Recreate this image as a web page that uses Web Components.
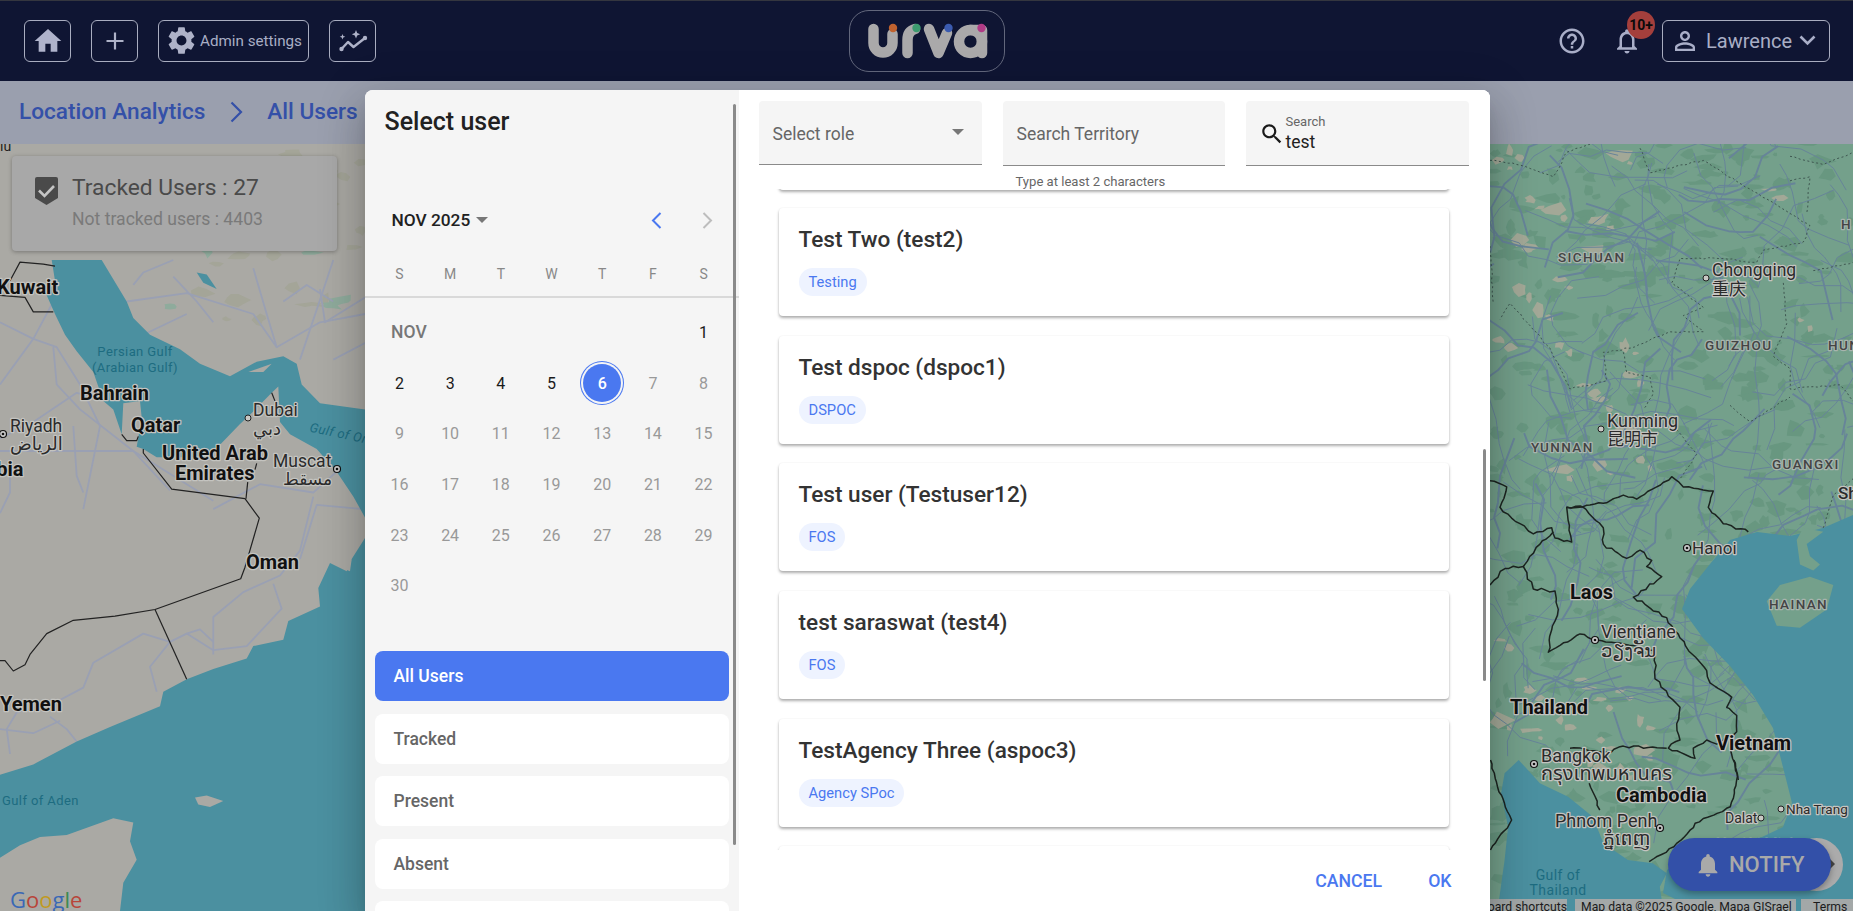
<!DOCTYPE html>
<html lang="en"><head><meta charset="utf-8"><title>Location Analytics</title>
<style>
html,body{margin:0;height:911px;overflow:hidden;background:#9a9fae;font-family:Roboto,"Liberation Sans",sans-serif}
app-shell{width:1853px;height:911px}
</style></head><body>
<app-shell></app-shell>
<script>
const ICON={
home:'M10 20v-6h4v6h5v-8h3L12 3 2 12h3v8z',
gear:'M19.14,12.94c0.04-0.3,0.06-0.61,0.06-0.94c0-0.32-0.02-0.64-0.07-0.94l2.03-1.58c0.18-0.14,0.23-0.41,0.12-0.61 l-1.92-3.32c-0.12-0.22-0.37-0.29-0.59-0.22l-2.39,0.96c-0.5-0.38-1.03-0.7-1.62-0.94L14.4,2.81c-0.04-0.24-0.24-0.41-0.48-0.41 h-3.84c-0.24,0-0.43,0.17-0.47,0.41L9.25,5.35C8.66,5.59,8.12,5.92,7.63,6.29L5.24,5.33c-0.22-0.08-0.47,0-0.59,0.22L2.74,8.87 C2.62,9.08,2.66,9.34,2.86,9.48l2.03,1.58C4.84,11.36,4.8,11.69,4.8,12s0.02,0.64,0.07,0.94l-2.03,1.58 c-0.18,0.14-0.23,0.41-0.12,0.61l1.92,3.32c0.12,0.22,0.37,0.29,0.59,0.22l2.39-0.96c0.5,0.38,1.03,0.7,1.62,0.94l0.36,2.54 c0.05,0.24,0.24,0.41,0.48,0.41h3.84c0.24,0,0.44-0.17,0.47-0.41l0.36-2.54c0.59-0.24,1.13-0.56,1.62-0.94l2.39,0.96 c0.22,0.08,0.47,0,0.59-0.22l1.92-3.32c0.12-0.22,0.07-0.47-0.12-0.61L19.14,12.94z M12,15.6c-1.98,0-3.6-1.62-3.6-3.6 s1.62-3.6,3.6-3.6s3.6,1.62,3.6,3.6S13.98,15.6,12,15.6z',
help:'M11 18h2v-2h-2v2zm1-16C6.48 2 2 6.48 2 12s4.48 10 10 10 10-4.48 10-10S17.52 2 12 2zm0 18c-4.41 0-8-3.59-8-8s3.59-8 8-8 8 3.59 8 8-3.59 8-8 8zm0-14c-2.21 0-4 1.79-4 4h2c0-1.1.9-2 2-2s2 .9 2 2c0 2-3 1.75-3 5h2c0-2.25 3-2.5 3-5 0-2.21-1.79-4-4-4z',
bellO:'M12 22c1.1 0 2-.9 2-2h-4c0 1.1.9 2 2 2zm6-6v-5c0-3.07-1.63-5.64-4.5-6.32V4c0-.83-.67-1.5-1.5-1.5s-1.5.67-1.5 1.5v.68C7.64 5.36 6 7.92 6 11v5l-2 2v1h16v-1l-2-2zm-2 1H8v-6c0-2.48 1.51-4.5 4-4.5s4 2.02 4 4.5v6z',
bell:'M12 22c1.1 0 2-.9 2-2h-4c0 1.1.89 2 2 2zm6-6v-5c0-3.07-1.64-5.64-4.5-6.32V4c0-.83-.67-1.5-1.5-1.5s-1.5.67-1.5 1.5v.68C7.63 5.36 6 7.92 6 11v5l-2 2v1h16v-1l-2-2z',
person:'M12 5.9c1.16 0 2.1.94 2.1 2.1s-.94 2.1-2.1 2.1S9.9 9.16 9.9 8s.94-2.1 2.1-2.1m0 9c2.97 0 6.1 1.46 6.1 2.1v1.1H5.9V17c0-.64 3.13-2.1 6.1-2.1M12 4C9.79 4 8 5.79 8 8s1.79 4 4 4 4-1.79 4-4-1.79-4-4-4zm0 9c-2.67 0-8 1.34-8 4v3h16v-3c0-2.66-5.33-4-8-4z',
search:'M15.5 14h-.79l-.28-.27C15.41 12.59 16 11.11 16 9.5 16 5.91 13.09 3 9.5 3S3 5.91 3 9.5 5.91 16 9.5 16c1.61 0 3.09-.59 4.23-1.57l.27.28v.79l5 4.99L20.49 19l-4.99-5zm-6 0C7.01 14 5 11.99 5 9.5S7.01 5 9.5 5 14 7.01 14 9.5 11.99 14 9.5 14z'
};
const svgI=(k,s,c)=>`<svg width="${s}" height="${s}" viewBox="0 0 24 24" fill="${c}" style="display:block;flex:none"><path d="${ICON[k]}"/></svg>`;
class Base extends HTMLElement{
  constructor(){super();this.attachShadow({mode:'open'});}
  render(css,html){this.shadowRoot.innerHTML=`<style>${css}</style>${html}`;}
}
const def=(n,c)=>customElements.define(n,c);

def('nav-button',class extends Base{connectedCallback(){
  this.render(`:host{display:inline-flex;align-items:center;justify-content:center;box-sizing:border-box;height:42px;min-width:47px;border:1px solid #a9adc0;border-radius:6px;color:#a9aec5;gap:6px;font-size:15px}`,`<slot></slot>`);
}});

def('urva-logo',class extends Base{connectedCallback(){
  this.render(`:host{display:block;box-sizing:border-box;width:156px;height:62px;border:1px solid #62677c;border-radius:20px}svg{display:block}`,
  `<svg width="154" height="60" viewBox="850 11 154 60" fill="none" stroke="#aaa9aa" stroke-width="10.5" stroke-linecap="round" stroke-linejoin="round" role="img" aria-label="urva">
   <path d="M873.5 29V43a9.5 9.5 0 0 0 19 0V34"/><path d="M907.5 53V40Q907.5 31 915 29"/><path d="M929 29L938.5 53L947 33"/>
   <circle cx="970.5" cy="41.5" r="11.5"/><path d="M970 30H982V53"/>
   <g stroke="none"><circle cx="893" cy="28" r="4.200" fill="#c0622f"/><circle cx="916.500" cy="28" r="4.200" fill="#3c9a6e"/><circle cx="948.500" cy="28" r="4.200" fill="#3b5bb0"/><circle cx="981.500" cy="28" r="4.200" fill="#b03b86"/></g></svg>`);
}});

def('app-header',class extends Base{connectedCallback(){
  this.render(`:host{display:grid;grid-template-columns:1fr auto 1fr;align-items:center;box-sizing:border-box;height:81px;background:#0f1533;border-top:1px solid #34363f;padding:0 23px 1px 24px}
  .l,.r{display:flex;align-items:center}.l{gap:20px}.r{justify-content:flex-end}
  .help{margin-right:25px}.bell{position:relative;margin-right:20px;height:30px}
  .badge{position:absolute;left:15px;top:-15px;width:28px;height:28px;border-radius:50%;background:#a43f3c;color:#0a0a0a;font:700 14px/28px Roboto,sans-serif;text-align:center}
  nav-button.user{width:168px;justify-content:flex-start;padding-left:7px;font-size:20px;gap:0}
  .name{margin:0 7px 0 6px}`,
  `<div class="l"><nav-button>${svgI('home',32,'#afb3cb')}</nav-button>
   <nav-button><svg width="24" height="24" viewBox="0 0 24 24" stroke="#aeb2c8" stroke-width="2.200"><path d="M12 3.500v17M3.500 12h17"/></svg></nav-button>
   <nav-button style="width:151px;justify-content:flex-start;padding-left:6px;gap:2px">${svgI('gear',33,'#aeb2c8')}<span style="font-size:15.200px">Admin settings</span></nav-button>
   <nav-button><svg width="30" height="26" viewBox="338 28 30 26" fill="none" stroke="#aeb2c8" stroke-width="2.400" stroke-linecap="round" stroke-linejoin="round"><path d="M341.500 49L348 42L353.500 47L365 38"/><g stroke="none" fill="#aeb2c8"><circle cx="341.500" cy="49" r="2.200"/><circle cx="365" cy="38" r="2.200"/><path d="M356 30l1.200 3 3 1.200-3 1.200-1.200 3-1.200-3-3-1.200 3-1.200zM342.500 34l.8 2 2 .8-2 .8-.8 2-.8-2-2-.8 2-.8z"/></g></svg></nav-button></div>
   <urva-logo></urva-logo>
   <div class="r"><span class="help">${svgI('help',30,'#a9aec8')}</span>
   <span class="bell">${svgI('bellO',30,'#a9aec8')}<span class="badge">10+</span></span>
   <nav-button class="user">${svgI('person',30,'#a9aec8')}<span class="name">Lawrence</span><svg width="17" height="11" viewBox="0 0 17 11" fill="none" stroke="#a9aec8" stroke-width="2.600"><path d="M1.500 1.500L8.500 8.500l7-7"/></svg></nav-button></div>`);
}});

def('bread-crumb',class extends Base{connectedCallback(){
  this.render(`:host{display:flex;align-items:center;box-sizing:border-box;height:63px;background:#9a9fae;padding:0 0 2px 19px;color:#3450a8;font-size:22.600px;font-weight:500;white-space:nowrap}
  svg{margin:0 24px 0 25px;display:block}`,
  `<span>Location Analytics</span><svg width="13" height="22" viewBox="0 0 13 22" fill="none" stroke="#3450a8" stroke-width="2.200"><path d="M1.500 1.500L11 11l-9.500 9.500"/></svg><span>All Users</span>`);
}});

def('tracked-card',class extends Base{connectedCallback(){
  this.render(`:host{position:absolute;left:12px;top:12px;box-sizing:border-box;width:325px;height:95px;background:#a8a8a8;border-radius:4px;box-shadow:0 1px 4px rgba(0,0,0,.3);display:flex;padding:21px 0 0 23px;gap:14px}
  .a{font-size:22.800px;line-height:24px;color:#4a4a4a;white-space:nowrap;margin-top:-1px}.b{font-size:17.600px;line-height:22px;color:#7a7a7a;margin-top:8px;white-space:nowrap}svg{display:block}`,
  `<svg width="23" height="28" viewBox="0 0 23 28"><path d="M2 0H21a2 2 0 0 1 2 2V21L11.500 28 0 21V2a2 2 0 0 1 2-2z" fill="#4a4a4a"/><path d="M4 13.500L9.500 19 19 9" fill="none" stroke="#c5c5c5" stroke-width="2.600"/></svg>
  <div><div class="a">Tracked Users : 27</div><div class="b">Not tracked users : 4403</div></div>`);
}});

def('notify-fab',class extends Base{connectedCallback(){
  this.render(`:host{position:absolute;left:1668px;top:694px;display:block;width:175px;height:53px}
  .c{position:absolute;right:0;top:0;width:53px;height:53px;border-radius:50%;background:#ababab}
  .c i{position:absolute;left:40px;top:21px;width:0;height:0;border-left:5px solid #444;border-top:5px solid transparent;border-bottom:5px solid transparent}
  .p{position:absolute;left:0;top:0;width:163px;height:53px;border-radius:27px;background:#3350a8;display:flex;align-items:center;box-shadow:0 3px 6px rgba(0,0,0,.3);color:#a9a9a9;font-size:22px;font-weight:500;box-sizing:border-box;padding-left:26px;gap:7px}`,
  `<div class="c"><i></i></div><div class="p">${svgI('bell',28,'#a9a9a9')}<span>NOTIFY</span></div>`);
}});

def('map-canvas',class extends Base{connectedCallback(){
  const L=(u,v)=>[u/3,260+v/2.409],R=(u,v)=>[1490+u/3,140+v/2.45],Z=(u,v)=>[1300+u/2.835,760+v/3];
  const pts=(a,f)=>{let s=[];for(let i=0;i<a.length;i+=2){const p=f(a[i],a[i+1]);s.push(p[0].toFixed(1)+','+p[1].toFixed(1));}return s.join(' ')};
  const pg=(a,f,c)=>`<polygon points="${pts(a,f)}" fill="${c}"/>`;
  const pl=(a,f,c,w,d)=>`<polyline points="${pts(a,f)}" fill="none" stroke="${c}" stroke-width="${w}" stroke-linejoin="round"${d?` stroke-dasharray="${d}"`:''}/>`;
  let seed=7;const rnd=()=>(seed=(seed*16807)%2147483647)/2147483647;
  const I=(u,v)=>[u,v];
  const jit=(a,amt)=>{const o=[];for(let i=0;i<a.length-2;i+=2){const x0=a[i],y0=a[i+1],x1=a[i+2],y1=a[i+3];const n=Math.max(1,Math.round(Math.hypot(x1-x0,y1-y0)/14));for(let k=0;k<n;k++){const t=k/n;o.push(x0+(x1-x0)*t+(k?(rnd()-.5)*amt:0),y0+(y1-y0)*t+(k?(rnd()-.5)*amt:0));}}o.push(a[a.length-2],a[a.length-1]);return o;};
  const blob=(x,y,rx,ry,c)=>{const n=6+Math.floor(rnd()*4);let p=[];for(let k=0;k<n;k++){const a=k/n*6.283;p.push((x+Math.cos(a)*rx*(.4+rnd()*.8)).toFixed(1)+','+(y+Math.sin(a)*ry*(.4+rnd()*.8)).toFixed(1));}return `<polygon points="${p.join(' ')}" fill="${c}"/>`;};
  const WATER='#4b90a0',LAND='#aaa9a4',GREEN='#74a08b',GD='#689780',TAN='#a3a897';
  let s='';
  s+=`<rect x="0" y="144" width="500" height="767" fill="${LAND}"/><rect x="1400" y="144" width="453" height="767" fill="${GREEN}"/>`;
  for(let i=0;i<34;i++){const x=170+rnd()*195,y=150+rnd()*170;s+=blob(x,y,4+rnd()*14,2+rnd()*6,i%5==0?'#8fab9c':'#a4a598');}
  for(let i=0;i<12;i++){const x=rnd()*120,y=770+rnd()*60;s+=blob(x,y,8+rnd()*10,3+rnd()*4,'#a6a598');}
  const lr=[[0,150,100,190,170,210,240,300,300,400,250,600],[0,300,100,190,160,100],[160,210,170,300,240,360,400,460,640,580],[0,460,400,460,510,555],[400,60,430,30,520,0],[380,100,560,80,760,130,830,210,960,150,1095,130],[760,20,800,130,830,210],[960,70,975,150,1095,90],[900,240,1000,0],[220,400,230,520,250,560],[330,340,230,320,100,390,0,430],[640,600,780,540,940,560,1010,510],[940,570,900,700,840,760,730,800,640,860,640,950],[1090,600,950,590,900,720],[820,780,845,840,740,930,640,940,560,900,510,920,450,980,470,1040],[560,900,600,890,640,920],[510,920,430,900,280,970,250,1030,180,1060,50,1090,20,1130,30,1190],[150,1100,200,1130,230,1160],[0,1130,100,1140,180,1110],[30,480,30,560,0,610],[520,40,590,100,640,150],[430,180,560,130],[850,100,920,60,1000,100],[1000,240,1095,200]];
  lr.forEach(r=>s+=pl(r,L,'#9aa0b3',1.8));
  s+=pg([155,0,305,0,380,100,400,140,450,180,540,215,600,250,690,280,770,245,850,232,890,250,905,300,960,345,1095,360,1095,620,1060,570,1010,510,950,455,870,420,840,390,835,305,815,320,760,365,720,395,660,445,620,475,470,475,430,455,410,450,425,380,420,340,370,345,365,420,340,360,310,340,280,270,230,220,195,180,165,130,140,85,165,50],L,WATER);
  s+=pg([0,1240,100,1215,230,1160,330,1125,480,1075,490,1040,560,1010,640,985,740,960,760,930,850,915,865,870,960,835,955,790,990,730,1040,750,1055,720,1095,670,1095,1568,0,1568],L,WATER);
  s+=pg([585,1295,620,1290,670,1303,630,1318,595,1312],L,LAND);
  s+=pg([0,1440,60,1410,120,1390,200,1385,340,1345,400,1355,390,1400,410,1445,370,1500,360,1568,0,1568],L,LAND);
  s+=pg([590,30,620,35,650,70,610,55],L,WATER)+pg([745,270,815,250,790,270],L,LAND)+pg([1035,745,1055,720,1050,750],L,LAND);
  [[30,50,60,5,130,10,165,15],[0,85,75,90,100,125,160,125],[365,420,380,435,410,435,415,425],[430,455,430,465,515,552,735,575,778,622,735,740,722,768,465,842,345,858,220,868,140,900,90,950,75,975,40,990,15,965,0,965],[465,842,560,1010],[738,575,743,535],[770,490,765,505],[815,320,825,340]].forEach(b=>s+=pl(b,L,'#222',1.2));
  for(let i=0;i<520;i++){s+=blob(1490+rnd()*363,144+rnd()*767,3+rnd()*14,2+rnd()*7,GD);}
  const tanP=[[1500,160],[1510,150],[1530,200],[1553,210],[1600,220],[1595,250],[1520,240],[1560,280],[1520,290],[1540,310],[1500,340],[1560,345],[1585,385],[1625,345],[1630,375],[1600,400],[1630,430],[1640,460],[1560,470],[1600,465],[1500,720],[1530,690],[1580,680],[1600,700],[1620,690],[1560,720],[1640,720],[1600,740],[1640,750],[1530,730],[1590,760],[1620,770],[1800,320],[1770,190],[1500,640],[1620,155]];
  tanP.forEach(([x,y])=>{s+=blob(x,y,4+rnd()*11,2+rnd()*7,TAN);s+=blob(x+10,y+8,3+rnd()*6,2+rnd()*4,TAN);});
  for(let i=0;i<210;i++){let x=1490+rnd()*363,y=144+rnd()*660,a=rnd()*6.283,p=[];for(let k=0;k<7;k++){p.push(x,y);x+=Math.cos(a)*(10+rnd()*20);y+=Math.sin(a)*(10+rnd()*20);a+=(rnd()-.5)*1.3;}s+=pl(p,I,'#678499',i%4?1:1.9);}
  s+=`<polygon points="1853,515 1823,528 1790,536 1757,532 1730,540 1710,564 1690,589 1682,609 1703,638 1730,666 1753,695 1773,728 1787,783 1792,803 1783,827 1762,837 1691,850 1667,870 1663,893 1691,907 1698,911 1853,911" fill="${WATER}"/>`;
  s+=pg([830,1130,870,1090,960,1070,1030,1090,1010,1150,930,1195,860,1190],R,GREEN);
  s+=pg([920,980,930,1040,970,1055,990,1040,960,1020,950,990,1000,960,940,950],R,GREEN);
  s+=pg([620,0,680,70,760,110,830,170,860,250,930,300,1000,310,1040,340,1020,380,1030,453,560,453,580,300,590,200,570,100,580,40],Z,WATER);
  [[0,835,50,850,30,900,90,940,130,965,185,950,195,975,245,985,230,900,290,895,340,890,400,870,440,880,500,850,545,825,580,850,670,860,655,900,700,940,775,960],
   [230,900,280,900,340,950,340,990,410,1025,450,1005,485,1030,470,1045,515,1070,430,1120,530,1170,570,1220,650,1300,660,1330,725,1365,710,1390,740,1410,740,1450,680,1480,650,1470,610,1490,615,1515,535,1490,570,1470,560,1430,570,1390,495,1320,495,1260],
   [0,1090,45,1050,100,1045,130,1100,195,1105,205,1150,185,1200,175,1255,270,1210,320,1225,490,1250],[100,1045,150,990,190,960],[530,1490,400,1485,350,1500,240,1490],[720,1490,745,1568]].forEach(b=>s+=pl(jit(b,7),R,'#1c2420',1.5));
  [[540,0,560,80,600,180,540,270],[1230,0,1240,50,1220,140,1120,190,1090,230,1060,260,990,305],[820,70,850,150]].forEach(b=>s+=pl(jit(b,6),Z,'#1c2420',1.5));
  [[0,50,80,60,190,90,230,30,300,10],[450,20,480,80,640,50,780,120,900,180,960,210,940,250,820,270,800,300,700,290,570,290,545,350,640,410,580,430,640,470,540,470,420,510,340,520,350,590,240,610,180,510,60,400,30,440],[880,350,890,450,850,530,900,560,900,610,1050,600,1089,640],[560,710,620,770,570,830],[0,260,10,400],[400,520,410,570,480,580,490,620,460,660],[720,650,780,690,900,630],[900,40,1000,60,1089,30],[900,100,960,90,950,180],[970,320,1089,300],[1000,950,1030,870,1089,830]].forEach(b=>s+=pl(jit(b,4),R,'#3e5650',1,'2 2.500'));
  const H='#c4c4c0';
  const t=(x,y,str,o={})=>{const {sz=17.5,w=400,c='#2b2b2b',h=H,ls,ff,an,rot,st}=o;return `<text x="${x}" y="${y}" dominant-baseline="central" font-size="${sz}" font-weight="${w}" fill="${c}"${h?` stroke="${h}" stroke-width="2.500" paint-order="stroke" stroke-linejoin="round"`:''}${ls?` letter-spacing="${ls}"`:''}${ff?` font-family="${ff}"`:''}${an?` text-anchor="${an}"`:''}${rot?` transform="rotate(${rot} ${x} ${y})"`:''}${st?` font-style="${st}"`:''}>${str}</text>`};
  const B={sz:20,w:700,c:'#111'};const W={sz:13,c:'#1d6c80',h:null,ls:.4};const Pv={sz:13.5,w:500,c:'#444',ls:1.4,h:'#a8b4ae'};
  const dot=(x,y,big)=>big?`<circle cx="${x}" cy="${y}" r="3.500" fill="#ccc" stroke="#111" stroke-width="1.200"/><circle cx="${x}" cy="${y}" r="1.300" fill="#111"/>`:`<circle cx="${x}" cy="${y}" r="3" fill="#c8c8c4" stroke="#222" stroke-width="1"/>`;
  s+=t(-3,287,'Kuwait',B)+t(135,351,'Persian Gulf',{...W,an:'middle'})+t(135,367,'(Arabian Gulf)',{...W,an:'middle'});
  s+=t(80,393,'Bahrain',B)+t(10,426,'Riyadh')+t(10,443,'الرياض',{ff:'DejaVu Sans',sz:18})+t(-35,469,'Arabia',B)+t(131,425,'Qatar',B);
  s+=t(253,410,'Dubai')+t(253,428,'دبي',{ff:'DejaVu Sans',sz:18})+t(162,453,'United Arab',B)+t(175,473,'Emirates',B);
  s+=t(273,461,'Muscat')+t(283,479,'مسقط',{ff:'DejaVu Sans',sz:17})+t(310,427,'Gulf of Oman',{...W,rot:12,st:'italic'})+t(246,562,'Oman',B)+t(0,704,'Yemen',B)+t(2,800,'Gulf of Aden',W);
  s+=dot(3,434,1)+dot(248,418)+dot(337,469,1);
  s+=`<text x="10" y="899" dominant-baseline="central" font-size="22" font-weight="500" font-family="Open Sans,Roboto,sans-serif"><tspan fill="#3a68b5">G</tspan><tspan fill="#b8453a">o</tspan><tspan fill="#c19a22">o</tspan><tspan fill="#3a68b5">g</tspan><tspan fill="#3a8a50">l</tspan><tspan fill="#b8453a">e</tspan></text>`;
  s+=t(0,146,'ıu',{sz:14,h:null,c:'#222'});
  s+=t(1558,257,'SICHUAN',Pv)+t(1712,270,'Chongqing')+t(1712,287,'重庆',{sz:17,ff:'Noto Sans CJK SC'})+t(1841,224,'H',Pv)+t(1705,345,'GUIZHOU',Pv)+t(1828,345,'HUNAN',Pv);
  s+=t(1607,420,'Kunming',{sz:18})+t(1607,437,'昆明市',{sz:17,ff:'Noto Sans CJK SC'})+t(1531,447,'YUNNAN',Pv)+t(1772,464,'GUANGXI',Pv)+t(1838,493,'Shenzhen',{sz:17,w:500});
  s+=t(1692,548,'Hanoi',{sz:17})+t(1769,604,'HAINAN',Pv)+t(1570,592,'Laos',B)+t(1601,631,'Vientiane',{sz:18})+t(1601,650,'ວຽງຈັນ',{ff:'DejaVu Sans',sz:18});
  s+=t(1510,707,'Thailand',B)+t(1716,743,'Vietnam',B)+t(1541,755,'Bangkok',{sz:18})+t(1541,774,'กรุงเทพมหานคร',{sz:20,ff:'Noto Sans Thai,DejaVu Sans,Noto Sans'});
  s+=t(1616,795,'Cambodia',B)+t(1555,820,'Phnom Penh',{sz:18})+t(1603,838,'ភ្នំពេញ',{sz:19,ff:'Noto Sans Khmer,DejaVu Sans'})+t(1725,818,'Dalat',{sz:14})+t(1786,809,'Nha Trang',{sz:13.500})+t(1716,845,'Ho Chi Minh',{sz:15});
  s+=t(1558,875,'Gulf of',{...W,an:'middle',sz:14})+t(1558,890,'Thailand',{...W,an:'middle',sz:14});
  s+=dot(1706,278)+dot(1601,429)+dot(1687,548,1)+dot(1595,640,1)+dot(1534,764,1)+dot(1660,828,1)+dot(1761,818)+dot(1781,809);
  this.render(`:host{display:block;position:relative;height:767px;overflow:hidden;font-family:Roboto,sans-serif}svg{display:block}
  .foot{position:absolute;left:1490px;top:755px;width:363px;height:14px;display:flex;font-size:12.200px;line-height:16px;color:#1b1b1b;white-space:nowrap;overflow:hidden}
  .foot span{background:#a3a8a8;display:block;overflow:hidden;height:14px;box-sizing:border-box}`,
  `<svg width="1853" height="767" viewBox="0 144 1853 767" font-family="Roboto,sans-serif">${s}</svg>
  <tracked-card></tracked-card>
  <div class="foot"><span style="width:77px;margin-right:8px;direction:rtl"><bdi>Keyboard shortcuts</bdi></span><span style="width:221px;padding-left:6px;margin-right:5px">Map data ©2025 Google, Mapa GISrael</span><span style="padding-left:12px;flex:1">Terms</span></div>
  <notify-fab></notify-fab>`);
}});

def('month-calendar',class extends Base{connectedCallback(){
  const days=['S','M','T','W','T','F','S'];
  let cells='<div class="c nov" style="grid-column:1/7">NOV</div><div class="c on">1</div>';
  for(let d=2;d<=30;d++){cells+=d===6?`<div class="c"><b>6</b></div>`:`<div class="c${d<6?' on':''}">${d}</div>`;}
  this.render(`:host{display:block;color:#1d1d1d}
  .h{display:flex;align-items:center;height:30px;padding:0 0 0 27px;position:relative}
  .h b{font-size:17.300px;font-weight:500;color:#212121}.cr{margin-left:6px;border-left:6px solid transparent;border-right:6px solid transparent;border-top:6px solid #777}
  .nav{margin-left:auto;display:flex;gap:40px;padding-right:26px}.nav svg{display:block}
  .wk,.g{display:grid;grid-template-columns:repeat(7,50.7px);margin-left:9.600px}
  .wk{height:22px;margin-top:28px;font-size:14px;line-height:22px;color:#888;text-align:center}
  hr{border:0;height:2px;background:#d9d9d9;margin:11px 0 9px}
  .g{grid-auto-rows:50.7px;font-size:16px}
  .c{display:flex;align-items:center;justify-content:center;color:#999}.on{color:#1a1a1a}
  .nov{justify-content:flex-start;padding-left:17px;color:#777;font-weight:500;font-size:17.500px}
  .c b{width:38px;height:38px;border-radius:50%;background:#4a78f0;color:#fff;font-weight:500;display:flex;align-items:center;justify-content:center;box-shadow:0 0 0 2px #f5f5f5,0 0 0 3px #4a78f0}`,
  `<div class="h"><b>NOV 2025</b><span class="cr"></span><span class="nav"><svg width="11" height="17" viewBox="0 0 11 17" fill="none" stroke="#4a78f0" stroke-width="2"><path d="M9.500 1L2 8.500 9.500 16"/></svg><svg width="11" height="17" viewBox="0 0 11 17" fill="none" stroke="#bdbdbd" stroke-width="2"><path d="M1.500 1L9 8.500 1.500 16"/></svg></span></div>
  <div class="wk">${days.map(d=>`<span>${d}</span>`).join('')}</div><hr><div class="g">${cells}</div>`);
}});

def('status-item',class extends Base{connectedCallback(){
  const a=this.hasAttribute('active');
  this.render(`:host{display:flex;align-items:center;box-sizing:border-box;height:50px;border-radius:8px;padding-left:19px;font-size:17.500px;font-weight:500;background:${a?'#4a78f0':'#fff'};color:${a?'#fff':'#666'}}`,`<slot></slot>`);
}});

def('filter-field',class extends Base{connectedCallback(){
  this.render(`:host{display:flex;align-items:center;box-sizing:border-box;height:65px;background:#f5f5f5;border-radius:4px 4px 0 0;border-bottom:1px solid #8a8a8a;padding:2px 0 0 14px;font-size:17.500px;color:#666;position:relative}`,`<slot></slot>`);
}});

def('role-chip',class extends Base{connectedCallback(){
  this.render(`:host{display:inline-block;height:28px;line-height:28px;padding:0 10px;border-radius:14px;background:#eef3ff;color:#4a78f0;font-size:14.700px}`,`<slot></slot>`);
}});

def('user-card',class extends Base{connectedCallback(){
  this.render(`:host{display:block;box-sizing:border-box;height:108px;margin:0 41px 19.700px 40px;background:#fff;border-radius:4px;box-shadow:0 2px 3px rgba(0,0,0,.32),0 0 2px rgba(0,0,0,.06);padding:17px 20px 0}
  .t{font-size:22.600px;font-weight:500;color:#333;line-height:30px;margin-bottom:13px;white-space:nowrap}`,
  `<div class="t">${this.getAttribute('name')||''}</div><slot name="chip"></slot>`);
}});

def('select-user-dialog',class extends Base{connectedCallback(){
  const names=[['Test Two (test2)','Testing'],['Test dspoc (dspoc1)','DSPOC'],['Test user (Testuser12)','FOS'],['test saraswat (test4)','FOS'],['TestAgency Three (aspoc3)','Agency SPoc']];
  this.render(`:host{display:flex;width:1125px;height:821px;border-radius:8px 8px 0 0;overflow:hidden;background:#fff;box-shadow:0 11px 15px -7px rgba(0,0,0,.2),0 24px 38px 3px rgba(0,0,0,.14),0 9px 46px 8px rgba(0,0,0,.12)}
  .left{position:relative;width:374px;flex:none;background:#f5f5f5;overflow:hidden;box-sizing:border-box;padding-top:16px}
  h2{margin:0 0 0 20px;font-size:25px;line-height:32px;font-weight:500;color:#212121}
  month-calendar{margin-top:67px}
  .st{display:grid;gap:12.500px;margin:40px 10px 0;width:354px}
  .sb{position:absolute;left:368px;top:14px;width:3px;height:741px;background:#8a8a8a;border-radius:2px}
  .right{position:relative;flex:1;display:flex;flex-direction:column;min-width:0;background:#fff}
  .fl{display:grid;grid-template-columns:223px 223px 223px;grid-template-rows:65px 14px;column-gap:20.500px;padding:11px 21px 0 20px;height:99px;box-sizing:border-box;flex:none;position:relative;z-index:1;background:#fff}
  .fl>:nth-child(2){margin-left:.5px}
  .hint{grid-column:2;font-size:13.100px;line-height:14px;color:#666;padding-left:13px;white-space:nowrap;margin-top:9px;position:relative;margin-left:.5px}
  .caret{position:absolute;left:193px;top:28px;border-left:6px solid transparent;border-right:6px solid transparent;border-top:6px solid #777}
  .srch{display:flex;align-items:center;padding-left:13px;font-size:0}
  .stk{display:flex;flex-direction:column;margin-left:1px;margin-top:1px}.stk small{font-size:13px;line-height:16px;color:#666;margin:-3px 0 0}.stk span{font-size:17.500px;line-height:21px;color:#212121;margin-top:2px}
  .list{flex:1;min-height:0;overflow:hidden;padding-top:1px}
  .ghost{margin-top:-108px;margin-bottom:18px}
  .act{flex:none;height:61px;display:flex;justify-content:flex-end;align-items:center;gap:46px;padding-right:38px;color:#4a78f0;font-size:17.700px;font-weight:500;background:#fff}
  .rb{position:absolute;left:744px;top:359px;width:3px;height:232px;background:#8a8a8a;border-radius:2px;z-index:2}`,
  `<section class="left"><h2>Select user</h2><month-calendar></month-calendar>
   <div class="st"><status-item active>All Users</status-item><status-item>Tracked</status-item><status-item>Present</status-item><status-item>Absent</status-item><status-item></status-item></div>
   <div class="sb"></div></section>
   <section class="right"><div class="fl">
     <filter-field style="height:64px">Select role<span class="caret"></span></filter-field>
     <filter-field>Search Territory</filter-field>
     <filter-field class="srch">${svgI('search',26,'#1a1a1a')}<div class="stk"><small>Search</small><span>test</span></div></filter-field>
     <div class="hint">Type at least 2 characters</div></div>
    <div class="list"><user-card class="ghost"></user-card>${names.map(n=>`<user-card name="${n[0]}"><role-chip slot="chip">${n[1]}</role-chip></user-card>`).join('')}<user-card></user-card></div>
    <div class="act"><span>CANCEL</span><span>OK</span></div>
    <div class="rb"></div></section>`);
}});

def('app-shell',class extends Base{connectedCallback(){
  this.render(`:host{display:block;position:relative;overflow:hidden}
  .ov{position:absolute;inset:0;display:flex;justify-content:center;align-items:flex-start;padding:90px 0 0 1px;box-sizing:border-box}`,
  `<app-header></app-header><bread-crumb></bread-crumb><map-canvas></map-canvas><div class="ov"><select-user-dialog></select-user-dialog></div>`);
}});
</script></body></html>
